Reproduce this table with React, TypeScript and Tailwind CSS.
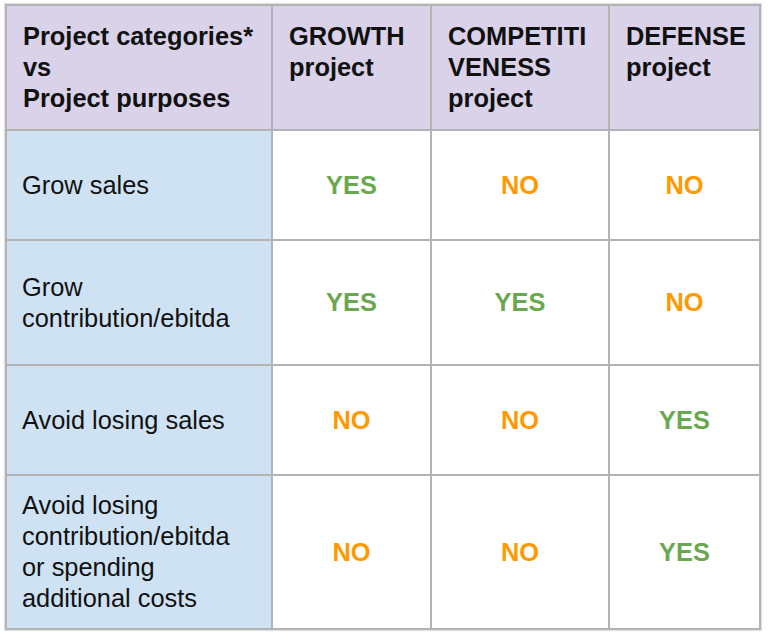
const headers = [
  ['Project categories*', 'vs', 'Project purposes'],
  ['GROWTH', 'project'],
  ['COMPETITI', 'VENESS', 'project'],
  ['DEFENSE', 'project'],
];

type Answer = 'YES' | 'NO';

const rows: { label: string[]; values: Answer[]; height: string }[] = [
  { label: ['Grow sales'], values: ['YES', 'NO', 'NO'], height: 'h-[108px]' },
  { label: ['Grow', 'contribution/ebitda'], values: ['YES', 'YES', 'NO'], height: 'h-[123px]' },
  { label: ['Avoid losing sales'], values: ['NO', 'NO', 'YES'], height: 'h-[108px]' },
  {
    label: ['Avoid losing', 'contribution/ebitda', 'or spending', 'additional costs'],
    values: ['NO', 'NO', 'YES'],
    height: 'h-[152px]',
  },
];

function Lines({ lines }: { lines: string[] }) {
  return (
    <>
      {lines.map((l, i) => (
        <div key={i}>{l}</div>
      ))}
    </>
  );
}

export default function App() {
  return (
    <div className="min-h-screen bg-white pl-[5px] pt-[4px] font-['Liberation_Sans',Arial,sans-serif] text-[25.4px] leading-[31px] text-[#111]">
      <div className="inline-grid grid-cols-[264px_157px_176px_149px] gap-[2px] bg-[#b3b3b3] p-[2px] shadow-[0_0_1px_1px_#e2e2e2]">
        {headers.map((h, i) => (
          <div key={i} className="h-[123px] bg-[#d9d2e9] pl-[16px] pt-[15px] font-bold">
            <Lines lines={h} />
          </div>
        ))}
        {rows.map((r, ri) => (
          <div key={ri} className="contents">
            <div className={`${r.height} flex flex-col justify-center bg-[#cfe2f3] pl-[15px]`}>
              <Lines lines={r.label} />
            </div>
            {r.values.map((v, vi) => (
              <div
                key={vi}
                className={`${r.height} flex items-center justify-center bg-white font-bold ${
                  v === 'YES' ? 'text-[#6aa84f]' : 'text-[#ff9900]'
                }`}
              >
                {v}
              </div>
            ))}
          </div>
        ))}
      </div>
    </div>
  );
}
